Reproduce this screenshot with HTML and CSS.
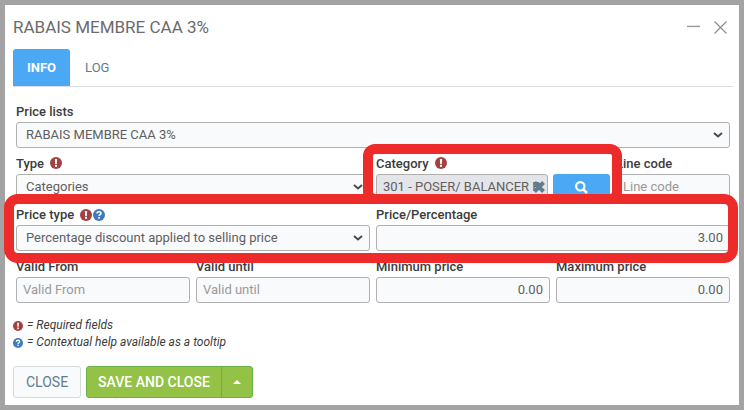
FILE: index.html
```html
<!DOCTYPE html>
<html lang="en">
<head>
    <meta charset="UTF-8">
    <meta name="viewport" content="width=device-width, initial-scale=1.0">
    <title>RABAIS MEMBRE CAA 3%</title>
    <link rel="stylesheet" href="styles.css">
</head>
<body>
    <!-- Shared icons -->
    <svg class="sprite" aria-hidden="true">
        <symbol id="required" viewBox="0 0 12 12">
            <circle cx="6" cy="6" r="6" fill="#a34141"/>
            <path d="M4.9 2h2.2l-.3 4.9H5.2z" fill="#fff"/>
            <rect x="5" y="7.8" width="2" height="2" fill="#fff"/>
        </symbol>
        <symbol id="help" viewBox="0 0 12 12">
            <circle cx="6" cy="6" r="6" fill="#4179bd"/>
            <path d="M4 4.5C4 3.3 4.9 2.7 6 2.7s2 .7 2 1.7c0 1.3-1.9 1.3-1.9 2.7" fill="none" stroke="#fff" stroke-width="1.6"/>
            <rect x="5.2" y="8" width="1.7" height="1.7" fill="#fff"/>
        </symbol>
        <symbol id="chevron" viewBox="0 0 10 6">
            <path d="M1 1l4 3.5L9 1" fill="none" stroke="#4a4a4a" stroke-width="2"/>
        </symbol>
    </svg>

    <main class="dialog">
        <header class="dialog-header">
            <h1>RABAIS MEMBRE CAA 3%</h1>
            <div class="window-buttons">
                <button type="button" aria-label="Minimize">
                    <svg width="13" height="13" viewBox="0 0 13 13"><path d="M0 5.4h13" stroke="#999" stroke-width="1.4"/></svg>
                </button>
                <button type="button" aria-label="Close window">
                    <svg width="13" height="13" viewBox="0 0 13 13"><path d="M.5.5l12 12M12.5.5l-12 12" stroke="#8c8c8c" stroke-width="1.2"/></svg>
                </button>
            </div>
        </header>

        <nav class="tabs">
            <a href="#info" class="tab active">INFO</a>
            <a href="#log" class="tab">LOG</a>
        </nav>

        <form>
            <div class="fields" id="info">
                <div class="row">
                    <div class="field full">
                        <div class="caption"><label for="priceList">Price lists</label></div>
                        <div class="select">
                            <select id="priceList"><option>RABAIS MEMBRE CAA 3%</option></select>
                            <svg><use href="#chevron"/></svg>
                        </div>
                    </div>
                </div>

                <div class="row">
                    <div class="field half">
                        <div class="caption">
                            <label for="type">Type</label>
                            <svg class="badge"><use href="#required"/></svg>
                        </div>
                        <div class="select">
                            <select id="type"><option>Categories</option></select>
                            <svg><use href="#chevron"/></svg>
                        </div>
                    </div>
                    <div class="field third marked">
                        <div class="caption">
                            <label for="category">Category</label>
                            <svg class="badge"><use href="#required"/></svg>
                        </div>
                        <div class="lookup">
                            <div class="lookup-value">
                                <input type="text" id="category" value="301 - POSER/ BALANCER PNEUS" readonly>
                                <button type="button" class="clear" aria-label="Clear category">
                                    <svg width="12" height="12" viewBox="0 0 12 12"><path d="M1.5 1.5l9 9M10.5 1.5l-9 9" stroke="#607d8b" stroke-width="4"/></svg>
                                </button>
                            </div>
                            <button type="button" class="search" aria-label="Search category">
                                <svg width="13" height="13" viewBox="0 0 13 13"><circle cx="5.3" cy="5.3" r="4.2" fill="none" stroke="#fff" stroke-width="2.2"/><path d="M8.3 8.3l3.7 3.7" stroke="#fff" stroke-width="2.6"/></svg>
                            </button>
                        </div>
                    </div>
                    <div class="field sixth">
                        <div class="caption"><label for="lineCode">Line code</label></div>
                        <input type="text" id="lineCode" placeholder="Line code">
                    </div>
                </div>

                <div class="row marked">
                    <div class="field half">
                        <div class="caption">
                            <label for="priceType">Price type</label>
                            <span class="badges">
                                <svg class="badge"><use href="#required"/></svg>
                                <svg class="badge"><use href="#help"/></svg>
                            </span>
                        </div>
                        <div class="select">
                            <select id="priceType"><option>Percentage discount applied to selling price</option></select>
                            <svg><use href="#chevron"/></svg>
                        </div>
                    </div>
                    <div class="field half">
                        <div class="caption"><label for="percentage">Price/Percentage</label></div>
                        <input type="text" id="percentage" class="number" value="3.00">
                    </div>
                </div>

                <div class="row">
                    <div class="field quarter">
                        <div class="caption"><label for="validFrom">Valid From</label></div>
                        <input type="text" id="validFrom" placeholder="Valid From">
                    </div>
                    <div class="field quarter">
                        <div class="caption"><label for="validUntil">Valid until</label></div>
                        <input type="text" id="validUntil" placeholder="Valid until">
                    </div>
                    <div class="field quarter">
                        <div class="caption"><label for="minPrice">Minimum price</label></div>
                        <input type="text" id="minPrice" class="number" value="0.00">
                    </div>
                    <div class="field quarter">
                        <div class="caption"><label for="maxPrice">Maximum price</label></div>
                        <input type="text" id="maxPrice" class="number" value="0.00">
                    </div>
                </div>
            </div>

            <div class="legend">
                <p><svg class="badge"><use href="#required"/></svg> = Required fields</p>
                <p><svg class="badge"><use href="#help"/></svg> = Contextual help available as a tooltip</p>
            </div>

            <div class="actions">
                <button type="button" class="close">CLOSE</button>
                <div class="split">
                    <button type="button" class="save">SAVE AND CLOSE</button>
                    <button type="button" class="more" aria-label="More save options">
                        <svg width="8" height="4" viewBox="0 0 8 4"><path d="M0 4l4-4 4 4z" fill="#fff"/></svg>
                    </button>
                </div>
            </div>
        </form>
    </main>
</body>
</html>
```
FILE: styles.css
```css
* {
    box-sizing: border-box;
}

body {
    margin: 0;
    padding: 5px;
    min-height: 100vh;
    display: flex;
    background-color: #a3a3a3;
    color: #3c3c3c;
    font-family: Roboto, sans-serif;
    font-size: 13px;
}

button,
input,
select {
    font: inherit;
    margin: 0;
}

button {
    display: flex;
    align-items: center;
    justify-content: center;
    padding: 0;
    border: none;
    background: none;
    cursor: pointer;
}

.sprite {
    position: absolute;
    width: 0;
    height: 0;
}

.dialog {
    flex: 1;
    min-width: 0;
    padding: 0 6px 7px 8px;
    background-color: #fff;
}

.dialog-header {
    display: flex;
    justify-content: space-between;
    align-items: center;
    height: 44px;
    padding-right: 6px;
}

h1 {
    margin: 0;
    color: #6b6b6b;
    font-size: 17px;
    font-weight: 400;
}

.window-buttons {
    display: flex;
    gap: 14px;
}

.tabs {
    display: flex;
    gap: 1px;
    border-bottom: 1px solid #ddd;
}

.tab {
    padding: 0 14px;
    line-height: 37px;
    border-radius: 3px 3px 0 0;
    color: #607d8b;
    text-decoration: none;
}

.tab.active {
    background-color: #4ba8f5;
    color: #fff;
    font-weight: 700;
}

.fields {
    padding: 9px 3px 0;
}

.row {
    display: grid;
    grid-template-columns: repeat(12, minmax(0, 1fr));
    column-gap: 6px;
}

.full {
    grid-column: span 12;
}

.half {
    grid-column: span 6;
}

.third {
    grid-column: span 4;
}

.quarter {
    grid-column: span 3;
}

.sixth {
    grid-column: span 2;
}

.caption {
    display: flex;
    align-items: center;
    gap: 6px;
    height: 26px;
    padding-top: 4px;
    font-weight: 500;
}

.badges {
    display: flex;
    gap: 1px;
}

.badge {
    width: 12px;
    height: 12px;
}

input,
select {
    display: block;
    width: 100%;
    height: 26px;
    padding: 0 6px 1px;
    border: 1px solid #b0b0b0;
    border-radius: 3px;
    background-color: #f9fafc;
    color: #606060;
    outline: none;
}

select {
    appearance: none;
    padding: 0 24px 1px 9px;
}

input::placeholder {
    color: #999;
}

input:focus,
select:focus {
    border-color: #4ba8f5;
}

.number {
    text-align: right;
}

.select {
    position: relative;
}

.select svg {
    position: absolute;
    top: 10px;
    right: 7px;
    width: 10px;
    height: 6px;
    pointer-events: none;
}

.lookup {
    display: flex;
    gap: 5px;
}

.lookup-value {
    position: relative;
    flex: 3;
}

.lookup-value input {
    background-color: #e4e5e9;
}

.clear {
    position: absolute;
    top: 7px;
    right: 3px;
}

.search {
    flex: 1;
    border-radius: 3px;
    background-color: #4ba8f5;
}

/* Red frames around the highlighted fields */
.marked {
    position: relative;
}

.marked::after {
    content: "";
    position: absolute;
    inset: -4px -12px -4px -13px;
    border: 10px solid #ee2b2b;
    border-radius: 12px;
    pointer-events: none;
    z-index: 1;
}

.row.marked::after {
    inset: -6px -8px -12px -12px;
    border-radius: 14px;
}

.row.marked .caption {
    height: 25px;
}

.legend {
    margin-top: 14px;
    font-size: 12px;
    font-style: italic;
    line-height: 17px;
}

.legend p {
    display: flex;
    align-items: center;
    gap: 4px;
    margin: 0;
}

.legend .badge {
    width: 10px;
    height: 10px;
}

.actions {
    display: flex;
    gap: 5px;
    margin-top: 15px;
    font-size: 14px;
}

.actions button {
    height: 32px;
}

.close {
    padding: 0 12px;
    border: 1px solid #d5dadf;
    border-radius: 3px;
    background-color: #f9fafc;
    color: #607d8b;
}

.split {
    display: flex;
    border: 1px solid #6ab04a;
    border-radius: 3px;
    background-color: #93c247;
}

.actions .split button {
    height: 30px;
}

.save {
    padding: 0 11px;
    color: #fff;
    font-weight: 500;
}

.more {
    width: 31px;
    border-left: 1px solid #6ab04a;
}
```
